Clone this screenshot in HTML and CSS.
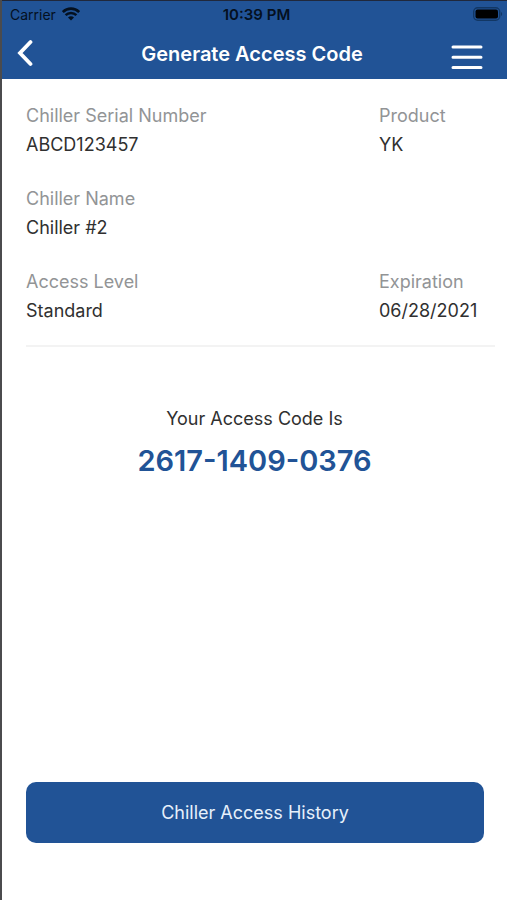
FILE: index.html
```html
<!DOCTYPE html>
<html lang="en">
<head>
    <meta charset="UTF-8">
    <meta name="viewport" content="width=device-width, initial-scale=1.0">
    <title>Generate Access Code</title>
    <link rel="stylesheet" href="styles.css">
</head>
<body>

    <header class="header">
        <div class="status-bar">
            <div class="carrier">
                <span>Carrier</span>
                <svg class="wifi" width="18" height="14" viewBox="0 0 18 14">
                    <path d="M0.8 5 C5.3 0.4 12.7 0.4 17.2 5" fill="none" stroke="#04101f" stroke-width="2.7"/>
                    <path d="M3.6 8.2 C6.6 5.2 11.4 5.2 14.4 8.2" fill="none" stroke="#04101f" stroke-width="2.5"/>
                    <path d="M6 10.4 C7.7 8.8 10.3 8.8 12 10.4 L9 13.6 Z" fill="#04101f"/>
                </svg>
            </div>
            <span class="time">10:39 PM</span>
            <div class="battery">
                <svg width="30" height="14" viewBox="0 0 30 14">
                    <rect x="0.7" y="0.7" width="26" height="12.6" rx="4" fill="none" stroke="#123764" stroke-width="1.4"/>
                    <rect x="2.5" y="2.5" width="22.5" height="9" rx="2" fill="#000"/>
                    <path d="M28 5 C29.5 5.5 29.5 8.5 28 9 Z" fill="#123764"/>
                </svg>
            </div>
        </div>
        <div class="nav-bar">
            <button class="icon-btn" type="button" aria-label="Back">
                <svg width="16" height="28" viewBox="0 0 16 28">
                    <path d="M13.5 3 L3 14 L13.5 25" fill="none" stroke="#fff" stroke-width="3.8" stroke-linecap="round" stroke-linejoin="miter"/>
                </svg>
            </button>
            <h1 class="title">Generate Access Code</h1>
            <button class="icon-btn menu-btn" type="button" aria-label="Menu">
                <svg width="32" height="26" viewBox="0 0 32 26">
                    <path d="M2 3 H30 M2 13.2 H30 M2 23.4 H30" fill="none" stroke="#fff" stroke-width="3" stroke-linecap="round"/>
                </svg>
            </button>
        </div>
    </header>

    <main class="content">
        <dl class="details">
            <div class="field">
                <dt>Chiller Serial Number</dt>
                <dd>ABCD123457</dd>
            </div>
            <div class="field">
                <dt>Product</dt>
                <dd>YK</dd>
            </div>
            <div class="field wide">
                <dt>Chiller Name</dt>
                <dd>Chiller #2</dd>
            </div>
            <div class="field">
                <dt>Access Level</dt>
                <dd>Standard</dd>
            </div>
            <div class="field">
                <dt>Expiration</dt>
                <dd>06/28/2021</dd>
            </div>
        </dl>

        <section class="access-code">
            <p class="code-label">Your Access Code Is</p>
            <p class="code">2617-1409-0376</p>
        </section>

        <button class="history-btn" type="button">Chiller Access History</button>
    </main>

</body>
</html>
```
FILE: styles.css
```css
* {
    box-sizing: border-box;
}

body {
    display: flex;
    flex-direction: column;
    min-height: 100vh;
    margin: 0;
    border-left: 2px solid #4b4b4d;
    background: #fff;
    color: #303030;
    font-family: Inter, "Liberation Sans", sans-serif;
    font-size: 18px;
}

/* Blue bar with status line and title */
.header {
    margin-left: -1px;
    border-top: 1px solid #20283c;
    background: #215396;
}

.status-bar {
    display: grid;
    grid-template-columns: 1fr auto 1fr;
    align-items: center;
    height: 26px;
    padding: 0 4px 0 9px;
    color: #04101f;
    font-size: 14px;
}

.carrier {
    display: flex;
    align-items: center;
    gap: 6px;
}

.time {
    font-size: 15px;
    font-weight: 600;
}

.battery {
    display: flex;
    justify-content: flex-end;
}

.nav-bar {
    display: grid;
    grid-template-columns: 1fr auto 1fr;
    align-items: center;
    height: 52px;
    padding: 0 24px 0 16px;
}

.title {
    margin: 0;
    padding: 2px 0 0 4px;
    color: #fff;
    font-size: 20px;
    font-weight: 600;
}

.icon-btn {
    display: flex;
    justify-self: start;
    padding: 0;
    border: none;
    background: none;
    cursor: pointer;
}

.menu-btn {
    justify-self: end;
    padding-top: 8px;
}

.content {
    display: flex;
    flex: 1;
    flex-direction: column;
    padding: 22px 12px 57px 24px;
}

/* Chiller details */
.details {
    display: grid;
    grid-template-columns: 1fr 116px;
    row-gap: 25px;
    margin: 0;
    padding-bottom: 20px;
    border-bottom: 2px solid #f3f3f3;
    line-height: 29px;
}

.wide {
    grid-column: span 2;
}

.field dt {
    color: #929496;
}

.field dd {
    margin: 0;
}

.access-code {
    padding: 57px 12px 0 0;
    text-align: center;
}

.code-label {
    margin: 0;
    line-height: 30px;
}

.code {
    margin: 6px 0 0;
    color: #215396;
    font-size: 29px;
    font-weight: 600;
    line-height: 42px;
}

.history-btn {
    height: 61px;
    margin-top: auto;
    margin-right: 11px;
    border: none;
    border-radius: 10px;
    background: #215396;
    color: #e6f0fb;
    font-family: inherit;
    font-size: 18px;
    cursor: pointer;
}
```
